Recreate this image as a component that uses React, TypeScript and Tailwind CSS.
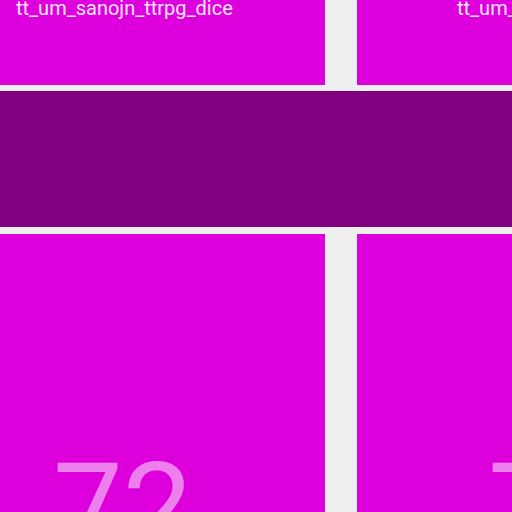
export default function App() {
  const font = { fontFamily: "Roboto, 'Noto Sans', sans-serif" };
  return (
    <div className="w-[512px] h-[512px] overflow-hidden bg-[#efefef]" style={font}>
      <div className="flex flex-col w-[700px]">
        <div className="flex h-[85px] gap-[32px]">
          <div className="w-[325px] bg-[#dd00dd] pl-[16px] overflow-hidden">
            <div className="text-[20px] leading-none -mt-[2px] text-white/90 whitespace-nowrap">tt_um_sanojn_ttrpg_dice</div>
          </div>
          <div className="w-[325px] bg-[#dd00dd] pl-[100px] overflow-hidden">
            <div className="text-[20px] leading-none -mt-[2px] text-white/90 whitespace-nowrap">tt_um_sanojn_ttrpg_dice</div>
          </div>
        </div>
        <div className="h-[136px] mt-[6px] bg-[#800080]"></div>
        <div className="flex h-[300px] mt-[7px] gap-[32px]">
          <div className="w-[325px] bg-[#dd00dd] pl-[53px] pt-[213px]">
            <div className="text-[124px] leading-none text-white/50">72</div>
          </div>
          <div className="w-[325px] bg-[#dd00dd] pl-[131px] pt-[213px]">
            <div className="text-[124px] leading-none text-white/50">72</div>
          </div>
        </div>
      </div>
    </div>
  );
}
